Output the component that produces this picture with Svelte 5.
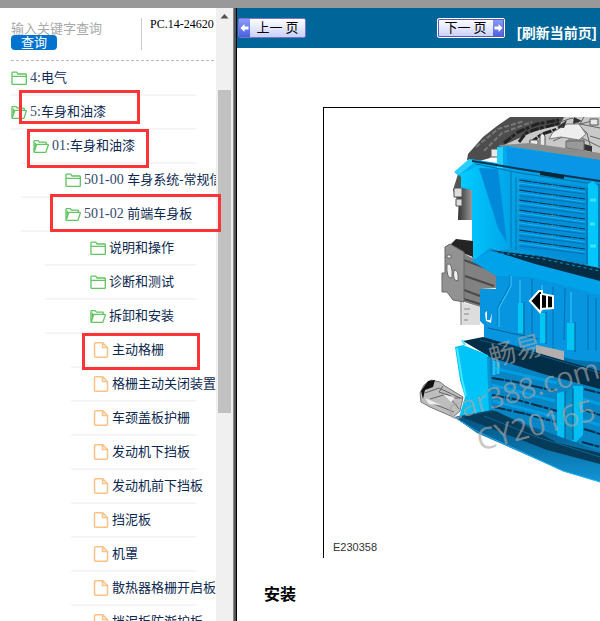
<script>
  let keyword = "";

  const rows = [
    { level: 0, icon: "folder", code: "4:", name: "电气" },
    { level: 0, icon: "open", code: "5:", name: "车身和油漆" },
    { level: 1, icon: "open", code: "01:", name: "车身和油漆" },
    { level: 2, icon: "folder", code: "501-00 ", name: "车身系统-常规信" },
    { level: 2, icon: "open", code: "501-02 ", name: "前端车身板" },
    { level: 3, icon: "folder", code: "", name: "说明和操作" },
    { level: 3, icon: "folder", code: "", name: "诊断和测试" },
    { level: 3, icon: "open", code: "", name: "拆卸和安装" },
    { level: 4, icon: "file", code: "", name: "主动格栅" },
    { level: 4, icon: "file", code: "", name: "格栅主动关闭装置" },
    { level: 4, icon: "file", code: "", name: "车颈盖板护栅" },
    { level: 4, icon: "file", code: "", name: "发动机下挡板" },
    { level: 4, icon: "file", code: "", name: "发动机前下挡板" },
    { level: 4, icon: "file", code: "", name: "挡泥板" },
    { level: 4, icon: "file", code: "", name: "机罩" },
    { level: 4, icon: "file", code: "", name: "散热器格栅开启板" },
    { level: 4, icon: "file", code: "", name: "挡泥板防渐护板" },
  ];

  // grille slats
  const slats = [0, 1, 2, 3, 4, 5, 6];
</script>

<div class="app">
  <div class="topbar"></div>
  <div class="frames">
    <nav class="sidebar">
      <div class="search">
        <form on:submit|preventDefault>
          <input type="text" placeholder="输入关键字查询" aria-label="输入关键字查询" bind:value={keyword} />
          <button type="submit">查询</button>
        </form>
        <div class="version">PC.14-24620</div>
      </div>
      <ul class="tree">
        {#each rows as row}
          <li class="level{row.level}">
            <a href="#top">
              {#if row.icon === "folder"}
                <svg class="icon" viewBox="0 0 17 16">
                  <path d="M1 13.5V2q0-.8.8-.8H6l1.5 2h8q.8 0 .8.8v9.5q0 .8-.8.8H1.8q-.8 0-.8-.8zM1 5.8h15.2" />
                </svg>
              {:else if row.icon === "open"}
                <svg class="icon" viewBox="0 0 17 16">
                  <path d="M1 13.5V2.4q0-.7.7-.7h3.8l1.3 1.6h6.6q.7 0 .7.7v1.8M1.2 14l2.6-7.6q.2-.6.8-.6h11.2q.7 0 .5.7l-2.4 7q-.3.8-1 .8H1.800q-.8 0-.8-.8M2.600 4v5" />
                </svg>
              {:else}
                <svg class="icon file" viewBox="0 0 15 16">
                  <path d="M2 .8h7.200L14 5.500v8.700q0 1-1 1H2q-1 0-1-1V1.800q0-1 1-1zM9 1v4.600h5" />
                </svg>
              {/if}
              <span class="label"><span class="code">{row.code}</span>{row.name}</span>
            </a>
          </li>
        {/each}
      </ul>
      <div class="mark mark1"></div>
      <div class="mark mark2"></div>
      <div class="mark mark3"></div>
      <div class="mark mark4"></div>
    </nav>

    <div class="scrollbar">
      <svg viewBox="0 0 17 17"><path d="M4.500 10.500h8l-4-4.500z" fill="#505050" /></svg>
      <div class="thumb"></div>
    </div>
    <div class="splitter"></div>

    <main>
      <header>
        <button class="page">
          <span class="arrow"><svg viewBox="0 0 10 12"><path d="M1 6l4-4v2.500h4v3H5V10z" /></svg></span>
          <span class="text">上一 页</span>
        </button>
        <button class="page next">
          <span class="text">下一 页</span>
          <span class="arrow"><svg viewBox="0 0 10 12"><path d="M9 6L5 2v2.500H1v3h4V10z" /></svg></span>
        </button>
        <a class="refresh" href="#top">[刷新当前页]</a>
      </header>

      <figure>
        <svg class="drawing" viewBox="324 108 276 383">
          <defs>
            <linearGradient id="panel" x1="0" y1="0" x2="1" y2="1">
              <stop offset="0" stop-color="#00b4f6" />
              <stop offset="1" stop-color="#0586cb" />
            </linearGradient>
            <linearGradient id="fender" x1="0" y1="0" x2="1" y2="0">
              <stop offset="0" stop-color="#00ccff" />
              <stop offset="1" stop-color="#009ce4" />
            </linearGradient>
            <linearGradient id="skirt" x1="0" y1="0" x2="0" y2="1">
              <stop offset="0" stop-color="#004c78" />
              <stop offset="1" stop-color="#1295d6" />
            </linearGradient>
            <linearGradient id="tyre" x1="0" y1="0" x2="1" y2="0">
              <stop offset="0" stop-color="#333" />
              <stop offset="1" stop-color="#999" />
            </linearGradient>
          </defs>

          <!-- engine bay -->
          <path d="M497 147L520 126 560 117H600V156L530 145z" fill="#c9c9c9" />
          <path d="M467 160L468 154 483 137 497 126 510 117H564L560 125 535 131 515 140 500 147 490 158 476 162z" fill="#4d4d4d" />
          <path d="M476 147l22-18 26-8M484 151l18-18 30-11" stroke="#777" stroke-width="2" fill="none" stroke-dasharray="5 2" />
          <path d="M504 143l14-11 19-8 22-4M519 142l7-9 11-4 24-6M530 143l12-9 22-7" stroke="#222" stroke-width="3" fill="none" stroke-dasharray="9 1 4 2" />
          <path d="M558 133l10-6 12 0 7 6 3 12M553 141l12-5 17 2 18 9M568 149v-9h16v12M584 117l-4 7 20 4M590 136l10 3M560 122l12-4 8 6 12-3" stroke="#666" fill="none" />
          <path d="M549 139l4-7 14-8h12l7 10-7 6-18-3z" fill="#eee" stroke="#777" />
          <path d="M540 146v-10l2-3 3 3v10zM530 140h8v7h-8zM590 119h8v6h-8zM491 149h7v8h-7z" fill="#e8e8e8" stroke="#555" stroke-width="1" />
          <path d="M574 117l8 4-9 3zM557 127l10-7-3 8zM580 143l12 3v6l-12-3z" fill="#333" />
          <path d="M566 141h18v10l-18-3z" fill="#999" stroke="#666" />
          <path d="M498 145L530 143 600 153V161L510 150z" fill="#8c8c8c" />
          <path d="M453 190l5-16 15-5v50h-15l3-14-6-9z" fill="#555" />
          <path d="M459 192l13-5v33h-14z" fill="url(#tyre)" />
          <path d="M454 188h8v9h-8zM456 199h6v7h-6z" fill="#ddd" stroke="#555" />

          <!-- upper front panel -->
          <path d="M455 173L471 159 497 163V147L508 146 600 160V281L540 266 492 252 472 262V190L461 188V177z" fill="url(#panel)" />
          <path d="M461 174L483 163 502 168 520 246 490 253 472 262V190L461 187z" fill="url(#fender)" />
          <path d="M479 168L498 169 507 243 498 228z" fill="#0089d8" />
          <path d="M506 147L600 160V181L508 168z" fill="#0a96e6" />
          <path d="M497 147h6v21h-6zM454 172l15-13 7 2-17 14z" fill="#28cfff" />
          <path d="M472 161L520 169 600 181" stroke="#003653" stroke-width="2" fill="none" />
          <path d="M476 164L520 173 600 185" stroke="#0070a8" fill="none" />
          <path d="M540 171l24 4v4l-24-4z" fill="#062738" />
          <path d="M520 178L588 187V262L520 249z" fill="#008fd8" />
          {#each slats as n}
            <g transform="translate(0 {n * 10})">
              <path d="M519 180l28 4 38 5" stroke="#05304a" fill="none" stroke-dasharray="13 1 5 1" />
              <path d="M519 183l30 4 36 5" stroke="#18b4f8" fill="none" />
              <path d="M519 186l28 3 38 5" stroke="#0073b0" fill="none" />
              <path d="M516 181h4M546 185l10 1" stroke="#3b8ba8" fill="none" />
            </g>
          {/each}
          <path d="M511 171V248M516 177V250" stroke="#0078b2" />
          <path d="M588 184l5-3 5 5v84l-10-4z" fill="#00c6fa" />
          <path d="M599 184V270M587 188V264" stroke="#006c9b" />
          <path d="M590 200h6M590 224h5M590 246h6" stroke="#36e7ff" stroke-width="3" />

          <!-- left mounting bracket -->
          <path d="M451 244l5-5 17 2v16l-18-7z" fill="#242424" />
          <path d="M463 253L497 271V288L480 289V307L461 301z" fill="#818181" />
          <path d="M464 260l32 12M465 276l29 10M464 290l16 6M464 299l16 5" stroke="#4a4a4a" stroke-width="2" />
          <path d="M445 247l5-3 14 8v50l-11-2-6-8h-5v-19h3z" fill="#929292" stroke="#666" />
          <path d="M447 264q6-2 5 14-6 1-5-14zM454 270q5-1 4 11-6 0-4-11zM447 255h4v3h-4z" fill="#eee" stroke="#666" />
          <path d="M460 302l20 5v18h-19z" fill="#ddd" />
          <path d="M461 302v23M464 309h6M464 314h5M464 320h4" stroke="#888" />

          <!-- centre panel -->
          <path d="M484 336L600 352V378L540 362 484 346z" fill="#0070aa" />
          <path d="M472 262L490 248 540 266 600 281V362L575 360 536 350 484 338V325L480 321V289H496V271z" fill="#0795df" />
          <path d="M472 261L490 251 530 261 600 281V295L530 277 496 276z" fill="#00a2ea" />
          <path d="M490 250L540 256 600 268V281L535 264z" fill="#042d44" />
          <path d="M495 252l48 7 57 12M502 251l45 6 53 11" stroke="#158fc4" stroke-dasharray="3 3" fill="none" />
          <path d="M510 275v10l-12 22v19M532 279v58M553 287v61M565 288l-1 52M588 295v55M596 298v53" stroke="#0071b3" fill="none" />
          <path d="M511 276v10l-12 22v19M520 280v24M542 285v27M571 292v31" stroke="#35cfff" fill="none" />
          <path d="M518 303h5v30h-5zM540 313h6v30h-6zM567 323h8v27h-8z" fill="#00c6f4" />
          <path d="M524 302v33M546 312v32M575 322v30M488 328l50 11" stroke="#006295" fill="none" />
          <path d="M485 313l1 8 5 2 1-10-2 7h-3v-9z" fill="#fff" />
          <path d="M536 345l28 6v10l-28-6z" fill="#b4aeae" />
          <path d="M530 301l9-10h3v3l11 2v12l-12 1-1 3z" fill="#000" stroke="#fff" stroke-width="2" />
          <path d="M541 294v16M547 295v14" stroke="#fff" stroke-width="2" />

          <!-- lower grille -->
          <path d="M487 351L600 376V466L490 415z" fill="#0785c5" />
          <path d="M463 341L483 337 538 353 600 371V389L543 374 490 357z" fill="#032e47" />
          <path d="M480 340l52 13 68 20" stroke="#075a85" fill="none" />
          <path d="M492 378l24 4 39 9M492 395l22 4 43 12M494 407l32 7 30 8M584 389l16 4M584 410l16 5M584 429l16 5M582 442l18 5" stroke="#00324e" stroke-width="2" stroke-dasharray="12 1 5 2" fill="none" />
          <path d="M493 368l64 15M492 385l63 16M493 401l63 16M583 399l17 5M583 420l17 5" stroke="#009fe4" stroke-width="3" fill="none" />
          <path d="M494 361v14M498 362v12" stroke="#1cc0f4" stroke-width="3" />
          <path d="M455 347L463 345 488 355 492 412 459 417 465 397 460 380z" fill="#00c3f7" />
          <path d="M487 357l3 2 2 53-3 1z" fill="#0098d5" />
          <path d="M457 348l5 31 4 17M462 340l3 5" stroke="#41e8ff" stroke-width="2" fill="none" />
          <path d="M557 393l8-2v49l-8 4zM573 386h10v49l-7 7-9-3z" fill="#06bff2" />
          <path d="M565 395l8-9v53l-8 4z" fill="#0092cc" />
          <path d="M556 444l11 3 12-4M565 391v50M573 388v52" stroke="#005985" fill="none" />

          <!-- bumper skirt -->
          <path d="M454 417L492 410 530 426 600 451V482L563 471 520 452 477 433z" fill="url(#skirt)" />
          <path d="M462 417L496 411 558 443 600 453V464L547 450z" fill="#063b59" />
          <path d="M454 417l24 15 42 19 43 20 37 11" stroke="#1fafee" fill="none" />
          <path d="M484 416l53 21 63 20" stroke="#0b6695" fill="none" />

          <!-- tow arm -->
          <path d="M420 393l4-8 7-5 9 2 5 4 18 11-3 14-7 6-23-10-9-5z" fill="#bdbdbd" stroke="#777" />
          <path d="M421 391l7-10 7-1-2 7-8 3-2 9z" fill="#111" />
          <path d="M425 393l14-5 21 10M430 399l17-5 12 15M443 386l-4 6 12 4M434 404l20 8M451 398h12" stroke="#666" fill="none" />
          <path d="M443 394l12 4-4 4zM425 398l16 7-12-1z" fill="#eee" />

          <g class="watermark">
            <text x="492" y="367" font-size="27" transform="rotate(-15 492 367)">畅易</text>
            <text x="450" y="421" font-size="29" transform="rotate(-16 450 421)">car388.com</text>
            <text x="480" y="451" font-size="30" transform="rotate(-15 480 451)">CY20165</text>
          </g>
        </svg>
        <figcaption>E230358</figcaption>
      </figure>
      <h2>安装</h2>
    </main>
  </div>
</div>

<style>
  :global(body) {
    margin: 0;
    background: #fff;
  }
  .app {
    display: flex;
    flex-direction: column;
    height: 100vh;
    overflow: hidden;
    font-family: "Liberation Serif", "Noto Sans CJK SC", serif;
    font-size: 13px;
  }
  .topbar {
    flex: none;
    height: 8px;
    background: #999;
  }
  .frames {
    flex: 1;
    display: flex;
    min-height: 0;
  }

  .sidebar {
    position: relative;
    flex: none;
    width: 216px;
  }
  .search {
    display: flex;
    margin: 0 2px 1px 11px;
    padding: 10px 0;
    border-bottom: 1px dashed #bbb;
  }
  form {
    display: flex;
    flex-direction: column;
    align-items: flex-start;
    width: 130px;
    height: 32px;
  }
  form input {
    box-sizing: border-box;
    width: 120px;
    height: 17px;
    padding: 2px 0 0;
    border: none;
    outline: none;
    background: none;
    font: 13px "Noto Sans CJK SC", sans-serif;
  }
  form input::placeholder {
    color: #a9a9a9;
    opacity: 1;
  }
  form button {
    width: 46px;
    height: 15px;
    padding: 0 0 2px;
    border: none;
    border-radius: 4px;
    background: #0073cf;
    color: #fff;
    font: 13px/13px "Noto Sans CJK SC", sans-serif;
  }
  .version {
    padding-left: 8px;
    border-left: 1px solid #ccc;
    font-size: 12px;
    line-height: 12px;
    white-space: nowrap;
  }

  .tree {
    height: 559px;
    margin: 0;
    padding: 0 0 0 11px;
    overflow: hidden;
    list-style: none;
  }
  .tree li {
    box-sizing: border-box;
    height: 34px;
    margin-right: 20px;
    border-bottom: 2px solid #f5f5f5;
  }
  .tree a {
    display: flex;
    align-items: center;
    gap: 3px;
    height: 32px;
    color: #0d2850;
    text-decoration: none;
    white-space: nowrap;
  }
  .level1,
  .level2 {
    margin-left: 10px;
  }
  .level3 {
    margin-left: 34px;
  }
  .level4 {
    margin-left: 60px;
  }
  .level1 a {
    padding-left: 12px;
  }
  .level2 a {
    padding-left: 44px;
  }
  .level3 a {
    padding-left: 45px;
  }
  .level4 a {
    padding-left: 22px;
  }
  .icon {
    flex: none;
    width: 16px;
    height: 15px;
    fill: none;
    stroke: #62c462;
    stroke-width: 1.4;
  }
  .icon.file {
    height: 16px;
    stroke: #fbc288;
    stroke-width: 1.5;
  }
  .label {
    padding-bottom: 4px;
  }
  .code {
    color: #30486c;
    font-size: 14px;
    white-space: pre;
  }

  /* red callouts over the tree */
  .mark {
    position: absolute;
    box-sizing: border-box;
    z-index: 1;
    border: 3px solid #fb3537;
    pointer-events: none;
  }
  .mark1 {
    left: 19px;
    top: 82px;
    width: 121px;
    height: 34px;
  }
  .mark2 {
    left: 27px;
    top: 121px;
    width: 122px;
    height: 39px;
  }
  .mark3 {
    left: 50px;
    top: 186px;
    width: 171px;
    height: 38px;
  }
  .mark4 {
    left: 82px;
    top: 325px;
    width: 118px;
    height: 37px;
  }

  .scrollbar {
    flex: none;
    width: 17px;
    background: #f0f0f0;
  }
  .scrollbar svg {
    display: block;
    width: 17px;
    height: 17px;
  }
  .thumb {
    height: 323px;
    margin: 65px 2px 0;
    background: #c1c1c1;
  }
  .splitter {
    flex: none;
    width: 2px;
    border-left: 1px solid #888;
    border-right: 1px solid #000;
    background: #555;
  }

  main {
    flex: 1;
    min-width: 0;
    overflow: hidden;
  }
  header {
    display: flex;
    align-items: center;
    height: 40px;
    padding-left: 1px;
    background: #069;
  }
  .page {
    display: flex;
    box-sizing: border-box;
    flex: none;
    width: 68px;
    height: 20px;
    padding: 0;
    border: 1px solid #7474c8;
    border-radius: 2px;
    background: linear-gradient(#fff, #c9d0fa);
    color: #000;
    font: 13px/16px "Noto Sans CJK SC", sans-serif;
  }
  .page.next {
    margin: 0 12px 0 131px;
    border-color: #fff;
    outline: 1px solid #5a5ab4;
    outline-offset: -2px;
  }
  .page .text {
    flex: 1;
    white-space: nowrap;
  }
  .page .arrow {
    display: flex;
    align-items: center;
    width: 11px;
    height: 18px;
    background: linear-gradient(#8c9bff, #4a5fe0);
  }
  .page .arrow svg {
    width: 11px;
    height: 12px;
    fill: #fff;
  }
  .refresh {
    padding-top: 8px;
    color: #fff;
    font: bold 14px "Liberation Sans", "Noto Sans CJK SC", sans-serif;
    text-decoration: none;
    white-space: nowrap;
  }

  figure {
    margin: 59px 0 0 86px;
    border: 1px solid #000;
    border-width: 1px 0 0 1px;
  }
  .drawing {
    display: block;
    width: 276px;
    height: 383px;
  }
  .watermark {
    fill: #a8a8a8;
    fill-opacity: 0.65;
    font-family: "Open Sans", "Noto Sans CJK SC", sans-serif;
  }
  figcaption {
    padding: 45px 0 0 9px;
    color: #333;
    font: 11px/22px "Liberation Sans", sans-serif;
  }
  h2 {
    margin: 23px 0 0 27px;
    font: bold 16px/24px "Noto Sans CJK SC", sans-serif;
  }
</style>
